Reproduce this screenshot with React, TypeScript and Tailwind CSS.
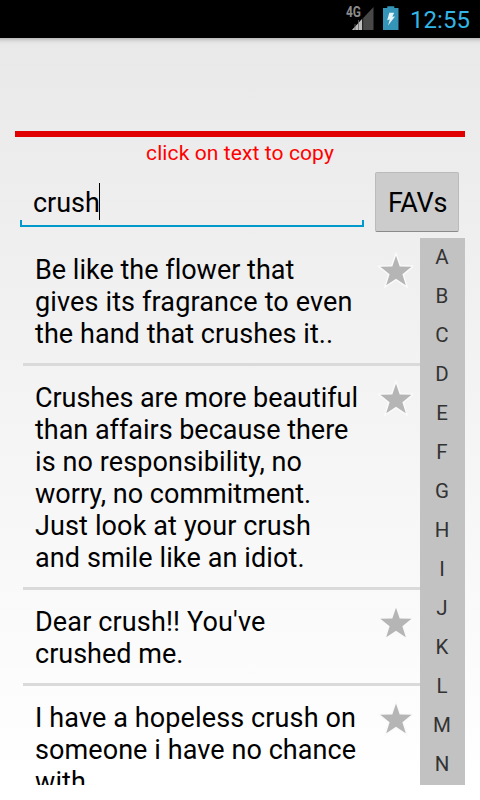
type Line = { text: string; tracking: string };

const QUOTES: Line[][] = [
  [
    { text: "Be like the flower that", tracking: "tracking-[0.01px]" },
    { text: "gives its fragrance to even", tracking: "tracking-[0.14px]" },
    { text: "the hand that crushes it..", tracking: "tracking-[0.06px]" },
  ],
  [
    { text: "Crushes are more beautiful", tracking: "tracking-[-0.05px]" },
    { text: "than affairs because there", tracking: "tracking-[-0.02px]" },
    { text: "is no responsibility, no", tracking: "tracking-[0.1px]" },
    { text: "worry, no commitment.", tracking: "tracking-[0.02px]" },
    { text: "Just look at your crush", tracking: "tracking-[0.13px]" },
    { text: "and smile like an idiot.", tracking: "tracking-[0.12px]" },
  ],
  [
    { text: "Dear crush!! You've", tracking: "tracking-[0.14px]" },
    { text: "crushed me.", tracking: "tracking-[0px]" },
  ],
  [
    { text: "I have a hopeless crush on", tracking: "tracking-[0.12px]" },
    { text: "someone i have no chance", tracking: "tracking-[0.08px]" },
    { text: "with", tracking: "tracking-[0.1px]" },
  ],
];

const LETTERS = "ABCDEFGHIJKLMN".split("");

function StatusBar() {
  return (
    <header className="flex h-[38px] shrink-0 items-start justify-end bg-black pr-[10px]">
      <svg width="30" height="38" viewBox="0 0 30 38" className="mr-[7px]">
        <path d="M27.5 7V30H6Z" fill="#484848" />
        <path d="M16.5 18.5V30H6Z" fill="#bdbdbd" />
        <path d="M12.5 20V30M9 24V30" stroke="#666" strokeWidth="0.8" />
        <path d="M16.7 17V30" stroke="#111" strokeWidth="1" />
        <path d="M0 6H15.5V18.5H0Z" fill="#000" />
        <text x="0" y="17" fontSize="14" fontWeight="700" fill="#8b8b8b" textLength="15" lengthAdjust="spacingAndGlyphs" fontFamily="Roboto, sans-serif">
          4G
        </text>
      </svg>
      <svg width="16" height="38" viewBox="0 0 16 38" className="mr-[11px]">
        <path d="M4.3 6.3H11.3V8H15.5V30H0V8H4.3Z" fill="#3595b9" />
        <path d="M6.3 12.8H11.2L9.3 16.8L12 16.5L5 25.5L6.8 19.6L4.2 20.2Z" fill="#e4f4fa" />
      </svg>
      <span className="text-[24px] leading-[40px] tracking-[0.05px] text-[#33b5e5]">12:55</span>
    </header>
  );
}

function SearchRow() {
  return (
    <div className="flex h-[70px] items-start pl-5">
      <div className="mt-[14px] flex h-[45px] w-[344px] flex-col">
        <div className="flex h-[38px] items-center pl-[13px]">
          <span className="pt-[3px] text-[27px] leading-8 tracking-[-0.05px]">crush</span>
          <span className="-ml-px h-[37px] w-px bg-black" />
        </div>
        <div className="h-[7px] border-x-2 border-b-2 border-[#0099cc]" />
      </div>
      <button className="ml-[11px] mt-[4px] h-[60px] w-[84px] rounded-[2px] border border-[#bbb] border-b-[#8a8a8a] bg-[#ccc] pl-px pt-[2px] text-[27px] tracking-[-0.3px]">
        FAVs
      </button>
    </div>
  );
}

function StarIcon() {
  return (
    <svg width="36" height="36" viewBox="0 0 36 36" className="-ml-px -mt-[2px] shrink-0">
      <path
        d="M19 3.8L22.7 14.4L34.5 14.8L25.4 22.2L28.8 33.2L19 26.8L9.2 33.2L12.6 22.2L3.3 14.8L15.3 14.4Z"
        fill="#b5b5b5"
        stroke="#fafafa"
        strokeWidth="3"
        className="[paint-order:stroke]"
      />
    </svg>
  );
}

function QuoteItem({ lines }: { lines: Line[] }) {
  return (
    <li className="flex border-b-[3px] border-[#dadada] pb-[13px] pl-3 pt-4">
      <p className="w-[343px] whitespace-nowrap text-[27px] leading-8">
        {lines.map((line) => (
          <span key={line.text} className={`block ${line.tracking}`}>
            {line.text}
          </span>
        ))}
      </p>
      <StarIcon />
    </li>
  );
}

export default function App() {
  return (
    <div className="flex h-[800px] w-[480px] flex-col overflow-hidden bg-white font-[Roboto,sans-serif] text-black">
      <StatusBar />
      <main className="flex h-[762px] flex-col bg-linear-to-b from-[#e9e9e9] to-white to-[98%] px-[15px] pt-[93px] shadow-[inset_0_7px_5px_-6px_#a0a0a0]">
        <div className="h-[6px] shrink-0 bg-[#e10000]" />
        <p className="h-[31px] shrink-0 text-center text-[21px] leading-8 tracking-[0.1px] text-[#ff0000]">
          click on text to copy
        </p>
        <div className="-ml-[15px] shrink-0">
          <SearchRow />
        </div>
        <div className="flex h-[547px] shrink-0 overflow-hidden">
          <ul className="ml-2 w-[397px]">
            {QUOTES.map((lines) => (
              <QuoteItem key={lines[0].text} lines={lines} />
            ))}
          </ul>
          <nav className="flex w-[45px] flex-col bg-[#c2c2c2] pr-px text-center text-[20.5px] leading-[39px] text-[#333]">
            {LETTERS.map((letter) => (
              <span key={letter} className="h-[39px] shrink-0">
                {letter}
              </span>
            ))}
          </nav>
        </div>
      </main>
    </div>
  );
}
